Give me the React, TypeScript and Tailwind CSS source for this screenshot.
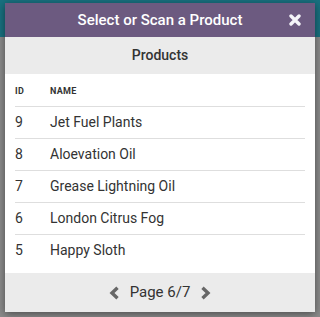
import React from 'react';

const PRODUCTS = [
    { id: 9, name: 'Jet Fuel Plants' },
    { id: 8, name: 'Aloevation Oil' },
    { id: 7, name: 'Grease Lightning Oil' },
    { id: 6, name: 'London Citrus Fog' },
    { id: 5, name: 'Happy Sloth' }
];

const CloseIcon = () => (
    <svg viewBox="0 0 12 12" className="absolute right-[14px] top-[11px] w-[12px] h-[12px]">
        <path d="M2 2L10 10M10 2L2 10" stroke="#f4f4f8" strokeWidth="3.4" strokeLinecap="round" />
    </svg>
);

const Chevron = ({ dir }: { dir: 'left' | 'right' }) => (
    <svg viewBox="0 0 11 14" className="w-[11px] h-[14px]">
        <path
            d={dir === 'left' ? 'M8.5 1.8L3 7L8.5 12.2' : 'M2.5 1.8L8 7L2.5 12.2'}
            fill="none"
            stroke="#676767"
            strokeWidth="3.4"
            strokeLinejoin="miter"
        />
    </svg>
);

const App: React.FC = () => {
    return (
        <div
            className="w-[320px] h-[317px] pt-[3px] pl-[5px] bg-[linear-gradient(to_bottom,#19707f_37px,#8b8b8b_37px)]"
            style={{ fontFamily: 'Roboto, "Noto Sans", sans-serif' }}
        >
            <div className="w-[310px] h-[309px] flex flex-col bg-white shadow-[0_2px_8px_rgba(0,0,0,0.45)]">
                {/* Título */}
                <div className="relative h-[34px] flex items-center justify-center bg-[#6c5a80] text-white">
                    <span className="text-[15px] font-medium">Select or Scan a Product</span>
                    <CloseIcon />
                </div>

                {/* Subtítulo */}
                <div className="h-[37px] flex items-center justify-center bg-[#ebebeb] text-[14px] font-medium text-[#333]">
                    Products
                </div>

                {/* Tabla */}
                <div className="px-[10px] pb-[7px] bg-white">
                    <div className="h-[32px] flex items-end pb-[8px] text-[9px] font-bold text-[#333] tracking-[0.3px]">
                        <span className="w-[35px]">ID</span>
                        <span>NAME</span>
                    </div>
                    {PRODUCTS.map(p => (
                        <div key={p.id} className="h-[32px] flex items-center border-t border-[#dedede] text-[14px] text-[#333]">
                            <span className="w-[35px]">{p.id}</span>
                            <span>{p.name}</span>
                        </div>
                    ))}
                </div>

                {/* Paginación */}
                <div className="flex-1 flex items-center justify-center gap-[10px] bg-[#ebebeb] text-[#333]">
                    <Chevron dir="left" />
                    <span className="text-[15px]">Page 6/7</span>
                    <Chevron dir="right" />
                </div>
            </div>
        </div>
    );
};

export default App;
